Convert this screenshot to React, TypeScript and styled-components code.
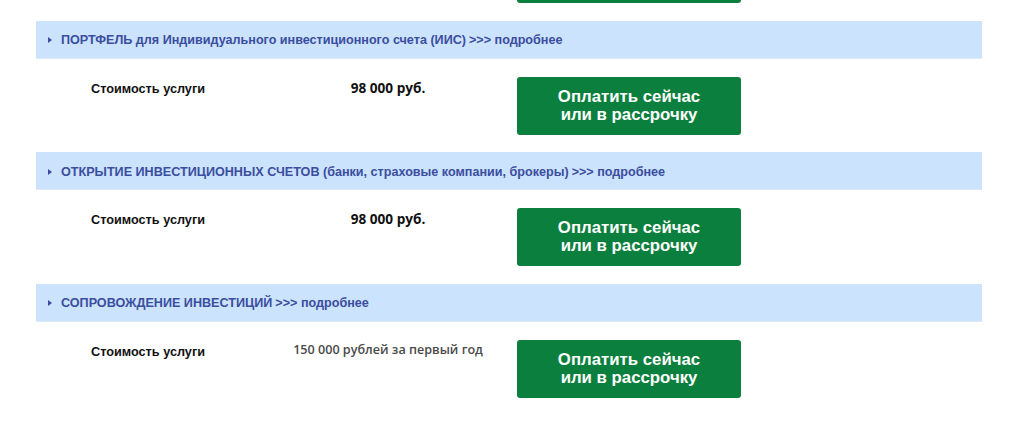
import * as React from 'react';
import styled, { createGlobalStyle } from 'styled-components';

const GlobalStyle = createGlobalStyle`
    html, body {
        margin: 0;
        padding: 0;
        background: #ffffff;
        font-family: "Liberation Sans", Arial, sans-serif;
    }
`;

export const Page = styled.div`
    width: 1024px;
    height: 437px;
    overflow: hidden;
`;

export const List = styled.ul`
    list-style: none;
    margin: -73px 0 0 36px;
    padding: 0;
    width: 946px;
`;

export const Section = styled.li`
    display: block;
`;

export const Header = styled.div`
    display: flex;
    align-items: center;
    height: 38px;
    padding: 2px 0 0 12px;
    background-color: #cbe3fc;
    border-bottom: 1px solid #dde9f5;
    box-sizing: border-box;
    color: #3b4d9f;
    font-size: 12.6px;
    font-weight: bold;
`;

export const Arrow = styled.span`
    display: inline-block;
    width: 0;
    height: 0;
    border-top: 3.5px solid transparent;
    border-bottom: 3.5px solid transparent;
    border-left: 4px solid #3b4d9f;
    margin-right: 9px;
`;

export const Title = styled.span``;

export const More = styled.span`
    margin-left: 3px;
`;

export const Body = styled.div`
    display: grid;
    grid-template-columns: 200px 226px 224px;
    align-items: start;
    height: 93.5px;
    padding: 18px 0 0 55px;
    box-sizing: border-box;
`;

export const Label = styled.div`
    padding-top: 5px;
    font-size: 12.7px;
    font-weight: bold;
    color: #111111;
`;

export const Price = styled.div<{ $muted?: boolean }>`
    padding: 1px 32px 0 0;
    text-align: center;
    font-family: "Open Sans", "Liberation Sans", sans-serif;
    font-size: ${p => (p.$muted ? '12.6px' : '13.6px')};
    font-weight: ${p => (p.$muted ? 600 : 700)};
    color: ${p => (p.$muted ? '#4a4a4a' : '#111111')};
`;

export const PayButton = styled.button`
    height: 58px;
    width: 224px;
    padding: 0;
    border: none;
    border-radius: 3px;
    background-color: #0b7f3d;
    color: #ffffff;
    font-family: "Liberation Sans", Arial, sans-serif;
    font-size: 16.8px;
    font-weight: bold;
    line-height: 18px;
    cursor: pointer;
`;

interface Item {
    title: string;
    price: string;
    muted?: boolean;
}

const items: Item[] = [
    {
        title: 'ПОРТФЕЛЬ для Индивидуального инвестиционного счета (ИИС)',
        price: '98 000 руб.',
    },
    {
        title: 'ОТКРЫТИЕ ИНВЕСТИЦИОННЫХ СЧЕТОВ (банки, страховые компании, брокеры)',
        price: '98 000 руб.',
    },
    {
        title: 'СОПРОВОЖДЕНИЕ ИНВЕСТИЦИЙ',
        price: '150 000 рублей за первый год',
        muted: true,
    },
];

export default function App() {
    return (
        <Page>
            <GlobalStyle />
            <List>
                {/* tail of the previous block, scrolled out of view */}
                <Section>
                    <Body>
                        <span />
                        <span />
                        <PayButton aria-hidden="true" />
                    </Body>
                </Section>
                {items.map((item, i) => (
                    <Section key={i}>
                        <Header>
                            <Arrow />
                            <Title>{item.title}</Title>
                            <More>&gt;&gt;&gt; подробнее</More>
                        </Header>
                        <Body>
                            <Label>Стоимость услуги</Label>
                            <Price $muted={item.muted}>{item.price}</Price>
                            <PayButton>
                                Оплатить сейчас
                                <br />
                                или в рассрочку
                            </PayButton>
                        </Body>
                    </Section>
                ))}
            </List>
        </Page>
    );
}
